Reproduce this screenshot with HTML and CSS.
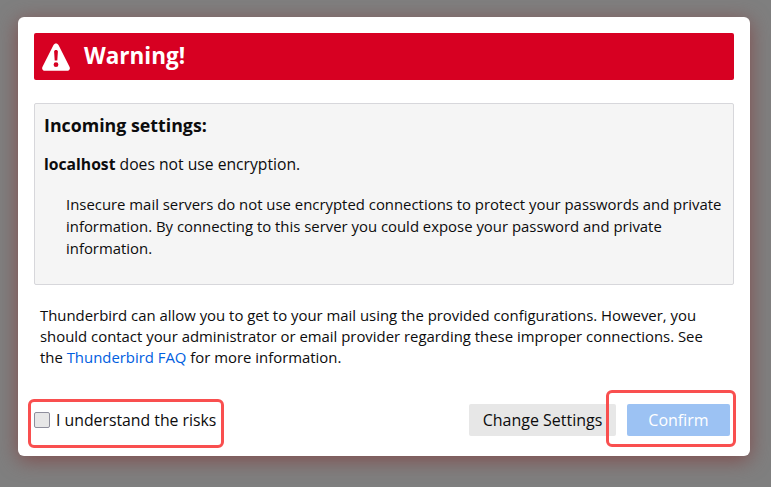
FILE: index.html
```html
<!DOCTYPE html>
<html lang="en">
<head>
    <meta charset="UTF-8">
    <title>Warning</title>
    <link rel="stylesheet" href="styles.css">
</head>
<body>
    <div class="dialog">
        <div class="warning-bar">
            <svg class="warning-icon" width="28" height="28" viewBox="0 0 28 28">
                <path fill="#fff" fill-rule="evenodd" d="M14 .5c1.100 0 2 .6 2.500 1.500l11.100 21.900c.9 1.900-.4 3.900-2.500 3.900H2.900C.8 27.800-.5 25.800.4 23.900L11.500 2C12 1.100 12.900.5 14 .5zM12.100 8.500l.6 9h2.600l.6-9c0-1-.8-1.600-1.900-1.600s-1.900.6-1.900 1.600zM14 19.300a2.400 2.400 0 1 0 0 4.800 2.400 2.400 0 0 0 0-4.800z"/>
            </svg>
            <span class="warning-title">Warning!</span>
        </div>

        <div class="info-box">
            <h2 class="info-heading">Incoming settings:</h2>
            <p class="info-line"><b>localhost</b> does not use encryption.</p>
            <p class="info-detail">Insecure mail servers do not use encrypted connections to protect your passwords and private information. By connecting to this server you could expose your password and private information.</p>
        </div>

        <p class="note">Thunderbird can allow you to get to your mail using the provided configurations. However, you should contact your administrator or email provider regarding these improper connections. See the <a href="#">Thunderbird FAQ</a> for more information.</p>

        <div class="footer">
            <label class="risk">
                <input type="checkbox" class="risk-check">
                <span>I understand the risks</span>
            </label>
            <div class="buttons">
                <button class="btn btn-grey">Change Settings</button>
                <button class="btn btn-blue" disabled>Confirm</button>
            </div>
        </div>
    </div>

    <div class="mark mark-risk"></div>
    <div class="mark mark-confirm"></div>
</body>
</html>
```

FILE: styles.css
```css
html, body {
    height: 100%;
}
body {
    background-color: #7f7f7f;
    color: #0c0c0d;
    font-family: "Open Sans", "Noto Sans", Arial, sans-serif;
    font-size: 14.9px;
    margin: 0;
    overflow: hidden;
    position: relative;
    padding: 17px 21px 0 18px;
    box-sizing: border-box;
}
.dialog {
    background-color: white;
    border-radius: 6px;
    box-shadow: 0 4px 20px rgba(130, 60, 60, 0.75);
    box-sizing: border-box;
    height: 439px;
    padding: 16px;
    display: flex;
    flex-direction: column;
}
.warning-bar {
    background-color: #d70022;
    border-radius: 2px;
    color: white;
    height: 47px;
    flex-shrink: 0;
    display: flex;
    align-items: center;
    padding-left: 8px;
    gap: 14px;
}
.warning-icon {
    flex-shrink: 0;
}
.warning-title {
    font-size: 22.500px;
    font-weight: 700;
    position: relative;
    top: -1px;
}
.info-box {
    background-color: #f5f5f5;
    border: 1px solid #d7d7db;
    border-radius: 2px;
    box-sizing: border-box;
    height: 182px;
    margin-top: 23px;
    padding: 10px 9px;
    flex-shrink: 0;
}
.info-heading {
    font-size: 17.800px;
    font-weight: 700;
    line-height: 22px;
    margin: 0;
}
.info-line {
    font-size: 15.700px;
    line-height: 22px;
    margin: 17px 0 0;
}
.info-detail {
    line-height: 22px;
    margin: 18px 0 0 22px;
}
.note {
    line-height: 21px;
    margin: 20px 0 0;
    padding: 0 6px;
}
a {
    color: #0060df;
    text-decoration: none;
}
.footer {
    margin-top: auto;
    display: flex;
    justify-content: space-between;
    align-items: center;
    height: 32px;
    margin-bottom: 4px;
}
.risk {
    display: flex;
    align-items: center;
    gap: 6px;
    font-size: 15.800px;
}
.risk-check {
    appearance: none;
    background-color: #e7e7e7;
    border: 1px solid #8f8f9d;
    border-radius: 2px;
    box-sizing: border-box;
    width: 16px;
    height: 16px;
    margin: 0;
}
.buttons {
    display: flex;
    gap: 11px;
    margin-right: 4px;
}
.btn {
    border: none;
    border-radius: 2px;
    font-family: inherit;
    font-size: 16px;
    height: 32px;
    padding: 0;
}
.btn-grey {
    background-color: #e7e7e7;
    color: #0c0c0d;
    width: 147px;
}
.btn-blue {
    background-color: #9cc2f3;
    color: white;
    width: 103px;
}
.mark {
    border: 3px solid #f94f4f;
    border-radius: 6px;
    box-sizing: border-box;
    position: absolute;
}
.mark-risk {
    left: 28px;
    top: 399px;
    width: 196px;
    height: 49px;
}
.mark-confirm {
    left: 606px;
    top: 390px;
    width: 130px;
    height: 57px;
}
```
